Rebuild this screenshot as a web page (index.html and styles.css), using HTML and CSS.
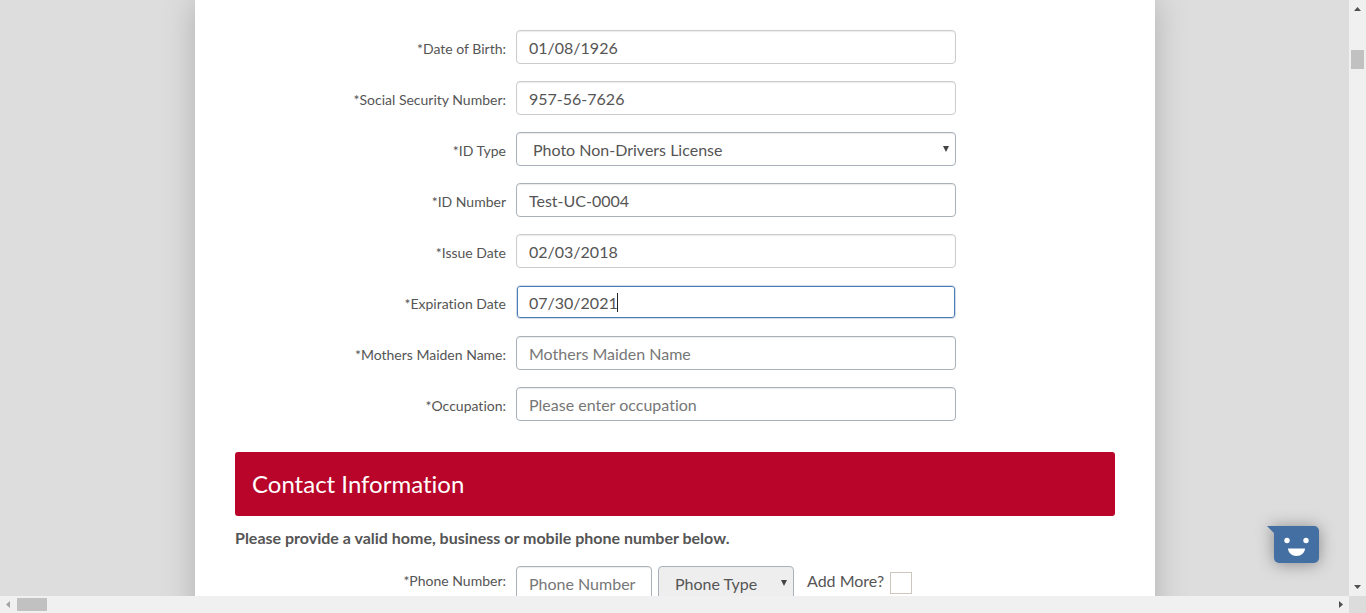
FILE: index.html
```html
<!DOCTYPE html>
<html lang="en">
<head>
<meta charset="utf-8">
<title>Contact Information</title>
<link rel="stylesheet" href="styles.css">
</head>
<body>
<main class="viewport">
  <form class="sheet">
    <div class="fields">
      <div class="row"><label for="dob">*Date of Birth:</label><input class="control masked" id="dob" type="text" value="01/08/1926"></div>
      <div class="row"><label for="ssn">*Social Security Number:</label><input class="control masked" id="ssn" type="text" value="957-56-7626"></div>
      <div class="row"><label for="idtype">*ID Type</label><span class="picker"><select class="control" id="idtype"><option>Photo Non-Drivers License</option></select></span></div>
      <div class="row"><label for="idnum">*ID Number</label><input class="control" id="idnum" type="text" value="Test-UC-0004"></div>
      <div class="row"><label for="issue">*Issue Date</label><input class="control masked" id="issue" type="text" value="02/03/2018"></div>
      <div class="row"><label for="expires">*Expiration Date</label><span class="editing"><input class="control active" id="expires" type="text" value="07/30/2021"><i class="caret"></i></span></div>
      <div class="row"><label for="maiden">*Mothers Maiden Name:</label><input class="control" id="maiden" type="text" placeholder="Mothers Maiden Name"></div>
      <div class="row"><label for="job">*Occupation:</label><input class="control" id="job" type="text" placeholder="Please enter occupation"></div>
    </div>
    <h2 class="banner">Contact Information</h2>
    <p class="hint">Please provide a valid home, business or mobile phone number below.</p>
    <div class="row phone">
      <label for="phone">*Phone Number:</label>
      <div class="phone-group">
        <input class="control" id="phone" type="text" placeholder="Phone Number">
        <span class="picker"><select class="control shaded" aria-label="Phone Type"><option>Phone Type</option></select></span>
        <label class="more" for="more">Add More?<input class="tick" id="more" type="checkbox"></label>
      </div>
    </div>
  </form>
</main>
<div class="bar bar-v" aria-hidden="true">
  <svg class="arrow" viewBox="0 0 17 17"><path d="M5 11h7L8.500 7z"/></svg>
  <span class="thumb"></span>
  <svg class="arrow end" viewBox="0 0 17 17"><path d="M5 6h7L8.500 10z"/></svg>
</div>
<div class="bar bar-h" aria-hidden="true">
  <svg class="arrow dim" viewBox="0 0 17 17"><path d="M10 5v7L6 8.500z"/></svg>
  <span class="thumb"></span>
  <svg class="arrow end" viewBox="0 0 17 17"><path d="M7 5v7l4-3.500z"/></svg>
</div>
<div class="corner"></div>
<button class="chat" type="button" aria-label="Chat">
  <svg viewBox="0 0 52 38"><path fill="#446fa3" d="M0 0h47a5 5 0 0 1 5 5v27a5 5 0 0 1-5 5H12a5 5 0 0 1-5-5V7z"/><circle cx="20" cy="14.500" r="2.700" fill="#fff"/><circle cx="39" cy="14.500" r="2.700" fill="#fff"/><path fill="#fff" d="M21 22.500h17c0 4-4 7.500-8.500 7.500S21 26.500 21 22.500z"/></svg>
</button>
</body>
</html>
```
FILE: styles.css
```css
* { box-sizing: border-box; }
body {
  margin: 0;
  height: 100vh;
  display: grid;
  grid-template-columns: 1fr 17px;
  grid-template-rows: 1fr 17px;
  font-family: Lato, "Open Sans", sans-serif;
  font-size: 16px;
  font-variant-ligatures: none;
  color: #555;
  background: #ddd;
}
.viewport {
  min-height: 0;
  overflow: hidden;
  padding-left: 1px;
}
.sheet {
  max-width: 960px;
  min-height: 100%;
  margin: 0 auto;
  padding: 30px 40px;
  background: #fff;
  box-shadow: 0 0 30px #b0b0b0;
}
.fields { display: grid; gap: 17px; }
.row {
  display: grid;
  grid-template-columns: 271px 50%;
  column-gap: 10px;
}
.row > label {
  font-size: 14px;
  line-height: 20px;
  padding-top: 9px;
  text-align: right;
}
.control {
  display: block;
  width: 100%;
  height: 34px;
  padding: 0 12px;
  border: 1px solid #a9b2ba;
  border-radius: 4px;
  background: #fff;
  box-shadow: inset 0 1px 1px #ececec;
  font: inherit;
  font-variant-ligatures: none;
  color: #555;
}
.control::placeholder { color: #777; opacity: 1; }
.masked { border-color: #ccc; }
.active {
  border-color: #d4dce6;
  box-shadow: inset 0 0 0 1px #4a7ebb;
  outline: none;
}
.editing, .picker { display: block; position: relative; }
.caret {
  position: absolute;
  left: 101px;
  top: 8px;
  width: 1px;
  height: 19px;
  background: #222;
}
select.control { appearance: none; padding-left: 16px; }
select.shaded { background: #eee; }
.picker::after {
  content: "";
  position: absolute;
  right: 7px;
  top: 14px;
  border: 3px solid transparent;
  border-top: 6px solid #444;
  border-bottom: 0;
}
.banner {
  margin: 31px 0 0;
  padding: 16px 17px;
  border-radius: 3px;
  background: #b90529;
  color: #fff;
  font-size: 24px;
  font-weight: 400;
  line-height: 32px;
}
.hint {
  margin: 12px 0 18px;
  font-weight: 700;
  line-height: 20px;
}
.phone > label { padding-top: 5px; }
.phone-group {
  display: grid;
  grid-template-columns: 136px 136px auto;
  justify-content: start;
  gap: 6px;
}
.more {
  display: flex;
  gap: 6px;
  padding: 5px 0 0 7px;
  line-height: 20px;
}
.tick {
  appearance: none;
  width: 22px;
  height: 22px;
  margin: 1px 0 0;
  border: 1px solid #ccc6bc;
  background: #fff;
}
.bar { background: #f0f0f0; display: flex; }
.bar-v { flex-direction: column; }
.arrow { width: 17px; height: 17px; fill: #505050; flex: none; }
.arrow.dim { fill: #a3a3a3; }
.end { margin-left: auto; }
.bar-v .end { margin: auto 0 0; }
.thumb { background: #c1c1c1; }
.bar-v .thumb { height: 19px; margin: 33px 2px 0; }
.bar-h .thumb { width: 30px; margin: 2px 0; }
.corner { background: #dcdcdc; }
.chat {
  position: fixed;
  right: 47px;
  bottom: 49px;
  width: 52px;
  height: 38px;
  padding: 0;
  border: 0;
  background: none;
  filter: drop-shadow(0 1px 8px #888);
}
.chat svg { display: block; width: 100%; height: 100%; }
```
